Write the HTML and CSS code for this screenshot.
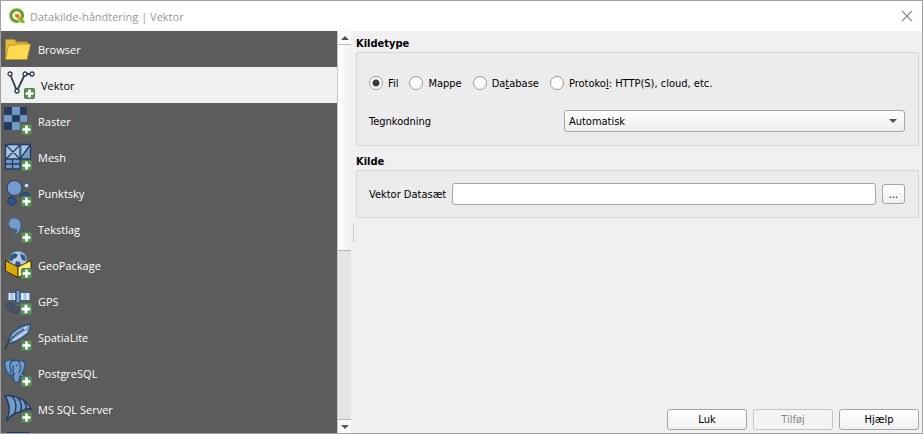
FILE: index.html
```html
<!DOCTYPE html>
<html lang="da">
<head>
    <meta charset="UTF-8">
    <meta name="viewport" content="width=device-width, initial-scale=1.0">
    <title>Datakilde-håndtering | Vektor</title>
    <link rel="stylesheet" href="styles.css">
</head>
<body>
    <svg class="defs" aria-hidden="true">
        <symbol id="plus" viewBox="0 0 11 11">
            <rect x="0.5" y="0.5" width="10" height="10" rx="1" fill="#5a8f5b" stroke="#4d824f"/>
            <path d="M5.5 1.5v8M1.5 5.500h8" stroke="#fff" stroke-width="2.6"/>
        </symbol>
    </svg>
    <div class="window">
        <header class="titlebar">
            <svg class="logo" viewBox="0 0 16 16">
                <circle cx="7.7" cy="7.6" r="5.8" fill="none" stroke="#6aa32c" stroke-width="3.2"/>
                <path d="M8 7.6l7.3 7.4h-3.8L6.6 10z" fill="#fff"/>
                <path d="M9 9.5h3l3.5 3.6V15h-3L9 11.8z" fill="#93b023"/>
                <path d="M6 6h3.3l2 2-2.6 2.8L6 8.6z" fill="#ee7913"/>
            </svg>
            <h1>Datakilde-håndtering | Vektor</h1>
            <button class="close" aria-label="Luk vindue">
                <svg viewBox="0 0 12 12"><path d="M1 1l10 10M11 1L1 11" stroke="#888" stroke-width="1.1"/></svg>
            </button>
        </header>
        <div class="main">
            <nav class="sidebar">
                <a class="item" href="#">
                    <svg class="icon" viewBox="0 0 28 28">
                        <path d="M1.5 24.5V4.5h9l2 2.5h11v4" fill="#e5bd3d" stroke="#a98a32"/>
                        <path d="M1.5 24.5l3-14.5h7l2-1h13l-3.5 15.5z" fill="#ffd94f" stroke="#b8942c"/>
                    </svg>
                    Browser
                </a>
                <a class="item active" href="#">
                    <svg class="icon" viewBox="0 0 28 28">
                        <path d="M3 3l7 17 8-17h7" fill="none" stroke="#2e3e4e" stroke-width="1.8"/>
                        <g fill="#f0f0f0" stroke="#2e3e4e" stroke-width="1.3">
                            <circle cx="3" cy="3" r="2"/><circle cx="10" cy="20" r="2"/>
                            <circle cx="18" cy="3" r="2"/><circle cx="25" cy="3" r="2"/>
                        </g>
                        <use href="#plus" x="17" y="17" width="11" height="11"/>
                    </svg>
                    Vektor
                </a>
                <a class="item" href="#">
                    <svg class="icon" viewBox="0 0 28 28">
                        <path d="M0 0h23v15h-7v8H0z" fill="#729bcb"/>
                        <path d="M0 0h8v8H0zM16 0h7v8h-7zM8 8h8v7H8zM0 15h8v8H0z" fill="#243d5f"/>
                        <path d="M8 0v23M16 0v23M0 8h23M0 15h23" stroke="#5c5c5c" stroke-width="0.4"/>
                        <use href="#plus" x="17" y="17" width="11" height="11"/>
                    </svg>
                    Raster
                </a>
                <a class="item" href="#">
                    <svg class="icon" viewBox="0 0 28 28">
                        <path d="M2 2h24v14H16v10H2z" fill="#729bcb"/>
                        <path d="M2 2h14v14H2zM18 2h8l-8 12z" fill="#a8c2e2"/>
                        <path d="M1.5 1.5h25V16h-25zM16 1.5V26H1.5V16M2 2l14 14M16 2L2 16M26 2L16 16M8.5 16v10M2 21h14" fill="none" stroke="#243d5f" stroke-width="1.3"/>
                        <use href="#plus" x="17" y="17" width="11" height="11"/>
                    </svg>
                    Mesh
                </a>
                <a class="item" href="#">
                    <svg class="icon" viewBox="0 0 28 28">
                        <circle cx="10.5" cy="9" r="7.5" fill="#729bcb" stroke="#243d5f"/>
                        <circle cx="22.5" cy="6.5" r="2.5" fill="#c0d4ec" stroke="#34506f"/>
                        <circle cx="8" cy="22" r="4.2" fill="#2d5482" stroke="#243d5f"/>
                        <circle cx="21.5" cy="18" r="4.8" fill="#2d5482" stroke="#243d5f"/>
                        <use href="#plus" x="17" y="17" width="11" height="11"/>
                    </svg>
                    Punktsky
                </a>
                <a class="item" href="#">
                    <svg class="icon" viewBox="0 0 28 28">
                        <path d="M7.5 22c4-2.500 5.500-5 5-8-4 1-8-1.500-8-5.500 0-3.500 2.500-5.500 5.500-5.500 4.500 0 7 3 7 7.500 0 5-3.500 9.500-9.500 11.500z" fill="#729bcb" stroke="#3c6492"/>
                        <use href="#plus" x="17" y="17" width="11" height="11"/>
                    </svg>
                    Tekstlag
                </a>
                <a class="item" href="#">
                    <svg class="icon" viewBox="0 0 28 28">
                        <path d="M1.5 9L14 4l13 5-13 7z" fill="#8a6a10"/>
                        <circle cx="14" cy="9" r="9" fill="#b4cae6" stroke="#4e78a8"/>
                        <path d="M7 4l4-2 3 2-2 3-3 1-1 3-3-3zM16 2l5 3 1 5-4-1-1-3zM12 10l4 1 1 3-3 4-3-4z" fill="#33587f"/>
                        <path d="M1.5 9.500L14 16v10.500L1.500 20z" fill="#d9a90c" stroke="#3a2e0a"/>
                        <path d="M27 9.500L14 16v10.500L27 20z" fill="#fff066" stroke="#3a2e0a"/>
                        <use href="#plus" x="17" y="17" width="11" height="11"/>
                    </svg>
                    GeoPackage
                </a>
                <a class="item" href="#">
                    <svg class="icon" viewBox="0 0 28 28">
                        <path d="M4 5.500h8v8H4zM16 5.500h10v8H16z" fill="#dce8f5" stroke="#3c6492"/>
                        <path d="M8 6v7M21 6v7" stroke="#a8c2e2" stroke-width="3"/>
                        <path d="M12 3.500l2-1 2 1v11l-2 2-2-2z" fill="#729bcb" stroke="#243d5f"/>
                        <path d="M8 15c0 4 3 6 8 6M5 15c0 6 4 9 11 9M2 15c0 8 5 11 13 11" fill="none" stroke="#34496a" stroke-width="1.4"/>
                        <use href="#plus" x="16" y="16" width="12" height="12"/>
                    </svg>
                    GPS
                </a>
                <a class="item" href="#">
                    <svg class="icon" viewBox="0 0 28 28">
                        <path d="M4 21C4 12 13 3 26 1c1 5-1 10-7 13-3 2-7 5-12 6z" fill="#729bcb" stroke="#243d5f"/>
                        <path d="M9 13l12-8M11 16l12-8M14 9l9-5M9 17l9-5" stroke="#c6daf0" stroke-width="1.8"/>
                        <path d="M1 27c2-8 8-15 19-21" fill="none" stroke="#243d5f" stroke-width="1.4"/>
                        <use href="#plus" x="17" y="17" width="11" height="11"/>
                    </svg>
                    SpatiaLite
                </a>
                <a class="item" href="#">
                    <svg class="icon" viewBox="0 0 28 28">
                        <path d="M5 16C2 12 0 6 1 3c2-3 6-2 8-1 2-1 4-1 6 0 3-1 6 0 6 3 0 4-1 7-3 10l3 1c-1 2-4 2-5 1l-1 5c-1 2-4 2-5 0l-1-7c-1 2-3 2-4 1z" fill="#729bcb" stroke="#2d5482" stroke-width="1.4"/>
                        <path d="M8 2C5 5 6 9 7 11l-1 4M14 2c3 3 3 8 1 12M9 6v7l2 3M14 6l-2 1" fill="none" stroke="#2d5482" stroke-width="1.3"/>
                        <use href="#plus" x="17" y="17" width="11" height="11"/>
                    </svg>
                    PostgreSQL
                </a>
                <a class="item" href="#">
                    <svg class="icon" viewBox="0 0 28 28">
                        <path d="M1 1c9-1 22 3 26 13-5-1-8 1-10 3-5 0-10 3-15 9C7 17 6 9 1 1z" fill="#729bcb" stroke="#243d5f" stroke-width="1.5"/>
                        <path d="M8 1c5 6 5 12 2 19M14 3c4 5 4 10 2 14M20 6c2 3 3 6 2 9" fill="none" stroke="#243d5f" stroke-width="1.5"/>
                        <use href="#plus" x="17" y="17" width="11" height="11"/>
                    </svg>
                    MS SQL Server
                </a>
                <a class="item" href="#" aria-label="Oracle">
                    <svg class="icon" viewBox="0 0 28 28">
                        <path d="M3 1.500h22v10H3z" fill="#3a6ea5" stroke="#243d5f"/>
                    </svg>
                </a>
            </nav>
            <div class="scrollbar">
                <button class="scroll-btn" aria-label="Rul op"><svg viewBox="0 0 8 4"><path d="M0 4l4-4 4 4z"/></svg></button>
                <div class="thumb"></div>
                <div class="track"></div>
                <button class="scroll-btn" aria-label="Rul ned"><svg viewBox="0 0 8 4"><path d="M0 0l4 4 4-4z"/></svg></button>
            </div>
            <div class="splitter"><span class="grip"></span></div>
            <form class="panel">
                <h2>Kildetype</h2>
                <section class="group type-group">
                    <div class="radios">
                        <label><input type="radio" name="type" checked>Fil</label>
                        <label><input type="radio" name="type">Mappe</label>
                        <label><input type="radio" name="type"><span>Da<u>t</u>abase</span></label>
                        <label><input type="radio" name="type"><span>Protoko<u>l</u>: HTTP(S), cloud, etc.</span></label>
                    </div>
                    <div class="encoding">
                        <label for="encoding">Tegnkodning</label>
                        <div class="combo">
                            <select id="encoding"><option>Automatisk</option></select>
                            <svg viewBox="0 0 8 4"><path d="M0 0l4 4 4-4z"/></svg>
                        </div>
                    </div>
                </section>
                <h2>Kilde</h2>
                <section class="group source-group">
                    <label for="dataset">Vektor Datasæt</label>
                    <input type="text" id="dataset">
                    <button type="button" class="browse">...</button>
                </section>
                <footer class="actions">
                    <button type="button">Luk</button>
                    <button type="button" disabled>Tilføj</button>
                    <button type="button">Hjælp</button>
                </footer>
            </form>
        </div>
    </div>
</body>
</html>
```
FILE: styles.css
```css
* {
    box-sizing: border-box;
}
body {
    margin: 0;
    font-family: "DejaVu Sans Condensed", "DejaVu Sans", sans-serif;
    font-size: 11px;
    color: #000;
}
h1, h2 {
    margin: 0;
}
button, input, select {
    font: inherit;
    color: inherit;
    margin: 0;
}
.defs {
    display: none;
}
.window {
    display: flex;
    flex-direction: column;
    height: 100vh;
    border: 1px solid #a0a0a0;
    background: #f0f0f0;
}
.titlebar {
    display: flex;
    align-items: center;
    gap: 5px;
    height: 30px;
    padding: 0 9px 0 8px;
    background: #fff;
}
.logo {
    width: 16px;
    height: 16px;
}
.titlebar h1 {
    flex: 1;
    font: 11px "Open Sans", sans-serif;
    color: #999;
}
.close {
    display: flex;
    padding: 0;
    border: none;
    background: none;
}
.close svg {
    width: 12px;
    height: 12px;
}
.main {
    display: flex;
    flex: 1;
    min-height: 0;
}

/* source list */
.sidebar {
    flex: 0 0 336px;
    overflow: hidden;
    background: #5c5c5c;
}
.item {
    display: flex;
    align-items: center;
    gap: 6px;
    height: 36px;
    padding-left: 3px;
    font: 11px "Open Sans", sans-serif;
    color: #fff;
    text-decoration: none;
}
.item.active {
    padding-left: 6px;
    background: #f0f0f0;
    color: #000;
}
.icon {
    width: 28px;
    height: 28px;
}
.scrollbar {
    display: flex;
    flex-direction: column;
    width: 14px;
    border-left: 1px solid #c4c4c4;
}
.scroll-btn {
    display: flex;
    align-items: center;
    justify-content: center;
    height: 13px;
    padding: 0;
    border: none;
    background: #fafafa;
}
.scroll-btn svg, .combo svg {
    width: 8px;
    height: 4px;
    fill: #555;
}
.thumb {
    flex: 206;
    border: solid #b8b8b8;
    border-width: 1px 0;
    background: linear-gradient(to right, #fff, #f1f1f1);
}
.track {
    flex: 169;
    border-bottom: 1px solid #b8b8b8;
    background: #e5e5e5;
}
.splitter {
    display: flex;
    align-items: center;
    width: 5px;
    padding-left: 2px;
}
.grip {
    height: 17px;
    border-left: 1px dotted #aaa;
}

/* settings */
.panel {
    display: flex;
    flex: 1;
    flex-direction: column;
    padding: 4px 3px 3px 0;
}
.panel h2 {
    font-size: 11px;
    line-height: 17px;
}
.group {
    border: 1px solid #d5d5d5;
    border-radius: 2px;
    background: #ececec;
}
.type-group {
    padding: 19px 13px 13px 12px;
    margin-bottom: 7px;
}
.radios {
    display: flex;
    align-items: center;
    gap: 11px;
    height: 22px;
    margin-bottom: 16px;
}
.radios label {
    display: flex;
    align-items: center;
    gap: 5px;
}
.radios input {
    appearance: none;
    width: 14px;
    height: 14px;
    border: 1px solid #9a9a9a;
    border-radius: 50%;
    background: #fff;
}
.radios input:checked {
    background: radial-gradient(circle, #3a3a3a 3px, #fff 4px);
}
.encoding {
    display: grid;
    grid-template-columns: 4fr 7fr;
    align-items: center;
}
.combo {
    position: relative;
}
.combo select {
    display: block;
    appearance: none;
    width: 100%;
    height: 22px;
    padding: 0 4px;
    border: 1px solid #a5a5a5;
    border-radius: 3px;
    background: linear-gradient(#fff, #eee);
}
.combo svg {
    position: absolute;
    top: 9px;
    right: 8px;
    pointer-events: none;
}
.source-group {
    display: flex;
    align-items: center;
    gap: 6px;
    height: 48px;
    padding: 0 13px 0 12px;
}
.source-group input {
    flex: 1;
    min-width: 0;
    height: 22px;
    padding: 0 4px;
    border: 1px solid #a5a5a5;
    border-radius: 3px;
    background: #fff;
}
.browse, .actions button {
    border: 1px solid #a5a5a5;
    border-radius: 3px;
    background: linear-gradient(#fff, #f0f0f0);
}
.browse {
    width: 23px;
    height: 20px;
    padding: 0;
}
.actions {
    display: flex;
    justify-content: flex-end;
    gap: 6px;
    margin-top: auto;
}
.actions button {
    width: 80px;
    height: 21px;
    padding: 0;
}
.actions button:disabled {
    border-color: #c4c4c4;
    background: #f4f4f4;
    color: #888;
}
```
